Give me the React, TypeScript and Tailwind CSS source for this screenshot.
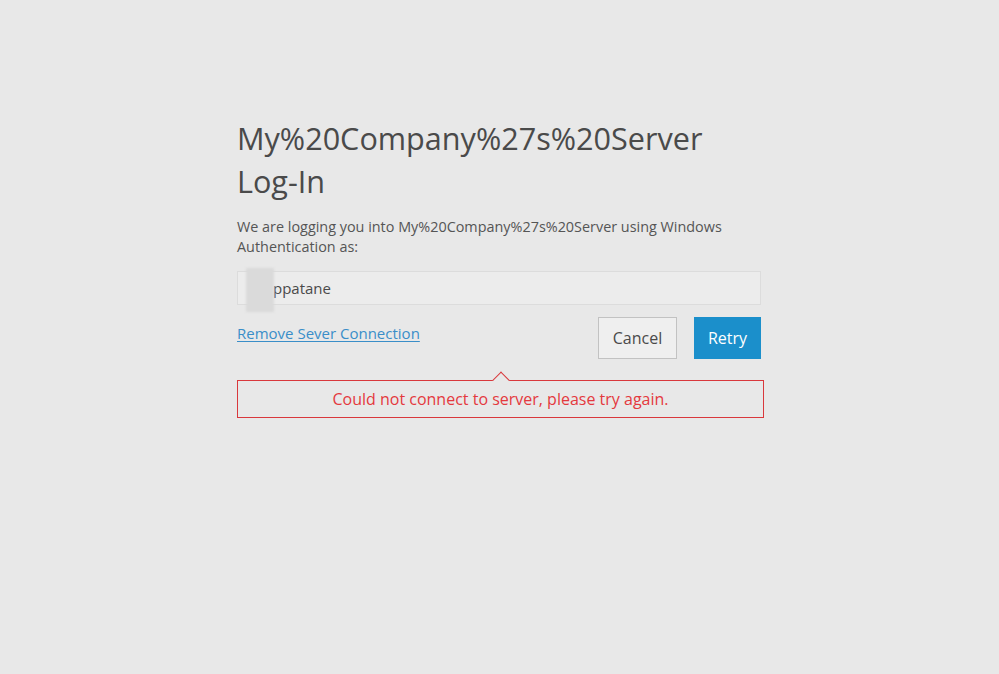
import React from 'react';

export default function App() {
  return (
    <div className="min-h-screen w-full bg-[#e8e8e8] font-['Open_Sans',sans-serif]">
      <div className="ml-[237px] w-[527px] pt-[117px]">
        <h1 className="text-[30.6px] leading-[43px] text-[#4a4a4a] font-normal">
          My%20Company%27s%20Server
          <br />
          Log-In
        </h1>

        <p className="mt-[14px] text-[14.4px] leading-[20px] text-[#555]">
          We are logging you into My%20Company%27s%20Server using Windows
          <br />
          Authentication as:
        </p>

        <div className="relative mt-[14px] h-[34px] w-[524px] border border-[#dcdcdc] bg-[#ececec] flex items-center pl-[35px] text-[15px] text-[#4a4a4a]">
          ppatane
          {/* redacted part of user name */}
          <div className="absolute left-[8px] top-[-4px] h-[44px] w-[28px] bg-[#dadada] blur-[1px]" />
        </div>

        <div className="mt-[12px] flex items-start justify-between pr-[3px]">
          <a href="#" className="mt-[5px] text-[15px] text-[#3a8ec8] underline underline-offset-2">
            Remove Sever Connection
          </a>
          <div className="flex gap-[17px]">
            <button className="h-[42px] w-[79px] border border-[#c2c2c2] bg-[#efefef] text-[16px] text-[#4a4a4a]">
              Cancel
            </button>
            <button className="h-[42px] w-[67px] bg-[#1b8fcb] text-[16px] text-white">
              Retry
            </button>
          </div>
        </div>

        <div className="relative mt-[21px] flex h-[38px] items-center justify-center border border-[#d9383c] text-[16px] text-[#e4393e]">
          <div className="absolute left-[257px] top-[-7px] h-[12px] w-[12px] rotate-45 border-l border-t border-[#d9383c] bg-[#e8e8e8]" />
          Could not connect to server, please try again.
        </div>
      </div>
    </div>
  );
}
